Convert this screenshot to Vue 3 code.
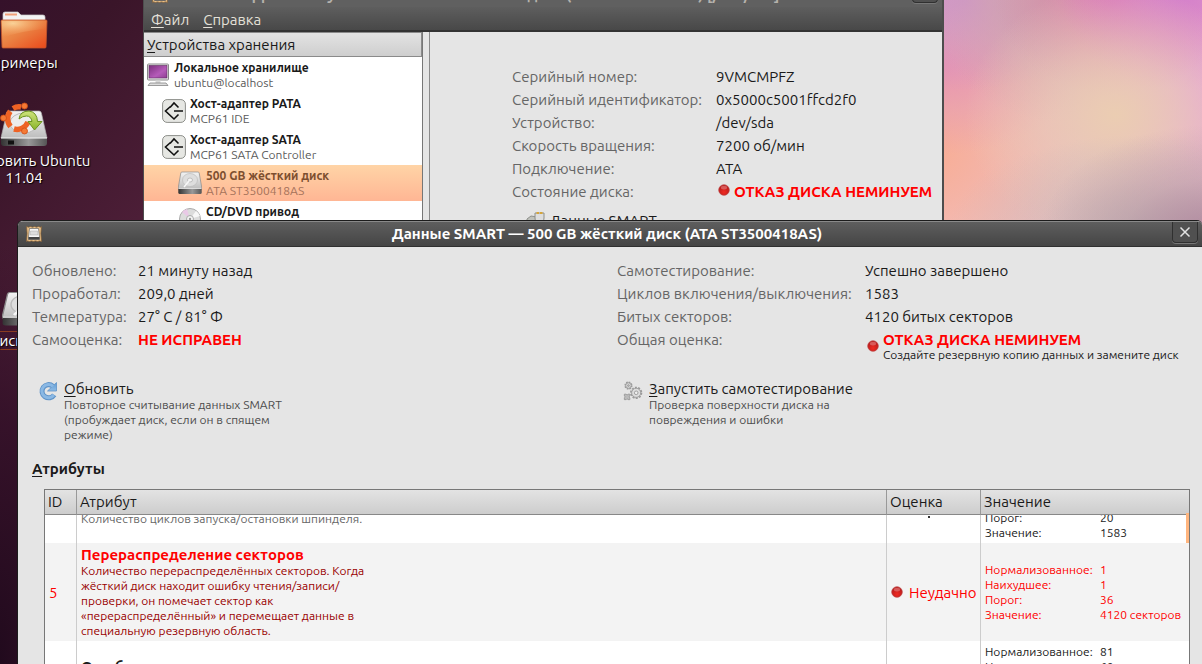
<script setup>
const tree = [
  { icon: 'computer', level: 0, name: 'Локальное хранилище', note: 'ubuntu@localhost' },
  { icon: 'adapter', level: 1, name: 'Хост-адаптер PATA', note: 'MCP61 IDE' },
  { icon: 'adapter', level: 1, name: 'Хост-адаптер SATA', note: 'MCP61 SATA Controller' },
  { icon: 'disk', level: 2, name: '500 GB жёсткий диск', note: 'ATA ST3500418AS', selected: true },
  { icon: 'cd', level: 2, name: 'CD/DVD привод', note: '' },
]
const drive = [
  ['Серийный номер:', '9VMCMPFZ'],
  ['Серийный идентификатор:', '0x5000c5001ffcd2f0'],
  ['Устройство:', '/dev/sda'],
  ['Скорость вращения:', '7200 об/мин'],
  ['Подключение:', 'ATA'],
]
const left = [
  ['Обновлено:', '21 минуту назад'],
  ['Проработал:', '209,0 дней'],
  ['Температура:', '27° C / 81° Ф'],
]
const right = [
  ['Самотестирование:', 'Успешно завершено'],
  ['Циклов включения/выключения:', '1583'],
  ['Битых секторов:', '4120 битых секторов'],
]
const failed = [
  ['Нормализованное:', '1'],
  ['Наихудшее:', '1'],
  ['Порог:', '36'],
  ['Значение:', '4120 секторов'],
]
const next = [
  ['Нормализованное:', '81'],
  ['Наихудшее:', '60'],
]
</script>

<template>
  <main class="desktop">
    <svg width="0" height="0" class="defs" aria-hidden="true">
      <defs>
        <linearGradient id="metal" x1="0" y1="0" x2="0" y2="1">
          <stop offset="0" stop-color="#f4f4f4" /><stop offset="1" stop-color="#bdbdbd" />
        </linearGradient>
        <linearGradient id="rim" x1="0" y1="0" x2="1" y2="0">
          <stop offset="0" stop-color="#333" /><stop offset="0.6" stop-color="#999" /><stop offset="1" stop-color="#555" />
        </linearGradient>
        <linearGradient id="orange" x1="0" y1="0" x2="1" y2="1">
          <stop offset="0" stop-color="#f2a45e" /><stop offset="0.45" stop-color="#ea8243" /><stop offset="1" stop-color="#e9481a" />
        </linearGradient>
        <radialGradient id="shine" cx="0.25" cy="0.15" r="0.8">
          <stop offset="0" stop-color="#fbdca4" stop-opacity="0.85" /><stop offset="1" stop-color="#f6a968" stop-opacity="0" />
        </radialGradient>
        <linearGradient id="leaf" x1="0" y1="0" x2="0" y2="1">
          <stop offset="0" stop-color="#cfe37c" /><stop offset="1" stop-color="#8ab52a" />
        </linearGradient>
        <linearGradient id="screen" x1="0" y1="0" x2="1" y2="1">
          <stop offset="0" stop-color="#7c2f7e" /><stop offset="0.6" stop-color="#b55bb9" /><stop offset="1" stop-color="#8e3d92" />
        </linearGradient>
        <linearGradient id="blue" x1="0" y1="0" x2="0" y2="1">
          <stop offset="0" stop-color="#5f9ad2" /><stop offset="1" stop-color="#8dbbe6" />
        </linearGradient>
        <radialGradient id="lamp" cx="0.5" cy="0.7" r="0.6">
          <stop offset="0" stop-color="#f02a22" /><stop offset="1" stop-color="#b81c1c" />
        </radialGradient>
        <symbol id="i-disk" viewBox="0 0 24 24" preserveAspectRatio="none">
          <path d="M4 1h16q1 0 1.200 1L24 18H0L2.800 2Q3 1 4 1z" fill="url(#metal)" stroke="#8a8a8a" stroke-width=".7" />
          <path d="M.3 17.500h23.400v4q0 1.500-1.500 1.500H1.800Q.3 23 .3 21.500z" fill="url(#rim)" />
          <path d="M.5 17.500h23" stroke="#ececec" stroke-width=".8" />
          <ellipse cx="12" cy="9" rx="7.500" ry="6.500" fill="#dedede" stroke="#bbb" stroke-width=".7" />
          <ellipse cx="12" cy="9" rx="2.500" ry="2" fill="#f4f4f4" stroke="#aaa" stroke-width=".7" />
          <path d="M6 16l5-6" stroke="#f7f7f7" stroke-width="1.500" />
        </symbol>
        <symbol id="i-app" viewBox="0 0 16 16">
          <path d="M.5.500l2 .7 2-.7 2 .7 2-.7 2 .7 2-.7 2 .7 1-.7-.6 7 .6 8-2-.6-2 .6-2-.6-2 .6-2-.6-2 .6-2-.6-1 .6.600-8z" fill="#e8c08a" stroke="#805c34" stroke-width=".7" />
          <path d="M3.500 2.500h9l1 8.500v2.500h-11V11z" fill="#f7f7f7" stroke="#555" stroke-width=".6" />
          <path d="M4.500 5h7l.3 4H4.200z" fill="#ddd" stroke="#999" stroke-width=".4" />
          <path d="M2.500 11h11v2.500h-11z" fill="#444" />
        </symbol>
        <symbol id="i-lamp" viewBox="0 0 12 12">
          <circle cx="6" cy="6" r="5.300" fill="url(#lamp)" stroke="#b44" stroke-width=".7" />
          <ellipse cx="6" cy="3.600" rx="3.200" ry="1.900" fill="#e58a8a" opacity=".55" />
        </symbol>
      </defs>
    </svg>

    <a class="launcher examples" href="#examples">
      <svg viewBox="0 0 48 40" width="48" height="40">
        <path d="M3 14V4q0-2 2-2h13l3 3h22q2 0 2 2v7z" fill="#f3f3f3" stroke="#c9c9c9" stroke-width=".7" />
        <path d="M5 4.500h12" stroke="#f0a079" stroke-width="2" />
        <path d="M1 11q0-1 1-1h44q1 0 1 1l-1 26q0 1-1 1H3q-1 0-1-1z" fill="url(#orange)" stroke="#c4542b" stroke-width=".8" />
        <path d="M1.800 10.800h44.400l-.3 8Q20 21 2 28z" fill="url(#shine)" />
      </svg>
      <span>Примеры</span>
    </a>
    <a class="launcher install" href="#install">
      <svg viewBox="0 0 48 46" width="48" height="46">
        <path d="M9 9h30q2 0 2.400 2L47 36H1L6.600 11Q7 9 9 9z" fill="url(#metal)" stroke="#aaa" stroke-width=".7" />
        <path d="M1 36h46v5q0 3-3 3H4q-3 0-3-3z" fill="url(#rim)" />
        <path d="M1 36h46" stroke="#fff" />
        <path d="M8 38.500h6v4H8z" fill="#111" />
        <ellipse cx="24" cy="21" rx="14" ry="10" fill="#ececec" stroke="#bbb" />
        <g fill="none" stroke="#ee6224" stroke-width="5.500">
          <path d="M10.500 24.500a12 12 0 0 1-.2-15.200" />
          <path d="M13 6.500a12 12 0 0 1 8-1.500" />
          <path d="M28 20a12 12 0 0 1-14 7" />
        </g>
        <g fill="#f47a35" stroke="#cf4b14" stroke-width=".8">
          <circle cx="3.500" cy="16" r="3" /><circle cx="24.500" cy="4" r="3" /><circle cx="24.500" cy="29" r="3" />
        </g>
        <path d="M19 17Q20 9 29 9q8 1 8.500 10.500H42L34.500 28 28 19.500h4Q31 14 26.500 14q-4 0-7.500 3z" fill="url(#leaf)" stroke="#6c9320" />
      </svg>
      <span>Установить Ubuntu<br />11.04</span>
    </a>
    <a class="launcher volume" href="#volume">
      <svg width="48" height="36"><use href="#i-disk" /></svg>
      <span>Диск DATA</span>
    </a>

    <section class="window utility">
      <header class="titlebar">
        <svg class="app" width="16" height="16"><use href="#i-app" /></svg>
        <h1>Дисковая утилита — 500 GB жёсткий диск (ATA ST3500418AS) [/dev/sda]</h1>
        <button class="close" aria-label="Закрыть"></button>
      </header>
      <nav class="menubar">
        <button><u>Ф</u>айл</button>
        <button><u>С</u>правка</button>
      </nav>
      <div class="panes">
        <aside class="tree">
          <h2><u>У</u>стройства хранения</h2>
          <ul>
            <li v-for="item in tree" :key="item.name" :class="['level' + item.level, { selected: item.selected }]">
              <svg v-if="item.icon === 'computer'" viewBox="0 0 24 24" width="24" height="24">
                <rect x="1.500" y="1" width="21" height="16" rx="1" fill="#e9e9e9" stroke="#888" />
                <rect x="3" y="2.500" width="18" height="12.500" fill="url(#screen)" stroke="#5d295e" stroke-width=".6" />
                <path d="M9.500 17.500h5v2.500h-5z" fill="#d8d8d8" />
                <path d="M4 20h16l2 2.500H2z" fill="#ddd" stroke="#777" stroke-width=".7" />
              </svg>
              <svg v-else-if="item.icon === 'adapter'" viewBox="0 0 24 24" width="24" height="24">
                <rect x=".6" y=".6" width="22.800" height="22.800" rx="4.500" fill="#e6e7e3" stroke="#8d8f8a" />
                <path d="M8 8.500L12 4l4.500 4.500M8.500 7.500L3.500 12l8.500 8 4.500-4.500M12 12h9" fill="none" stroke="#111" stroke-width="1.600" />
              </svg>
              <svg v-else-if="item.icon === 'disk'" width="24" height="24"><use href="#i-disk" /></svg>
              <svg v-else viewBox="0 0 24 24" width="24" height="24">
                <circle cx="12" cy="12" r="10.500" fill="#dcdcdc" stroke="#aaa" />
                <path d="M12 12L4 5A10.500 10.500 0 0 1 9 2z" fill="#e9c9e6" />
                <path d="M12 12l6-8a10 10 0 0 1 4 5z" fill="#f7f7f7" />
                <circle cx="12" cy="12" r="3.500" fill="#f4f4f4" stroke="#aaa" /><circle cx="12" cy="12" r="1.200" fill="#999" />
              </svg>
              <div><strong>{{ item.name }}</strong><small>{{ item.note }}</small></div>
            </li>
          </ul>
        </aside>
        <div class="detail">
          <dl class="facts">
            <template v-for="[k, v] in drive" :key="k"><dt>{{ k }}</dt><dd>{{ v }}</dd></template>
            <dt>Состояние диска:</dt>
            <dd class="alert"><svg width="12" height="12"><use href="#i-lamp" /></svg><strong>ОТКАЗ ДИСКА НЕМИНУЕМ</strong></dd>
          </dl>
          <button class="smart">
            <svg viewBox="0 0 20 20" width="20" height="20">
              <path d="M1 8l4-3 6 1v9H1z" fill="#bfc1bc" stroke="#8d8f8a" />
              <path d="M9 2h9v5q0 4-4.500 5Q9 11 9 7z" fill="#ddd" stroke="#8d8f8a" />
              <path d="M10.500 2h6" stroke="#d6a53a" stroke-width="2" stroke-dasharray="2.500 1" />
            </svg>
            Данные SMART
          </button>
        </div>
      </div>
    </section>

    <section class="window dialog">
      <header class="titlebar">
        <svg class="app" width="16" height="16"><use href="#i-app" /></svg>
        <h1>Данные SMART — 500 GB жёсткий диск (ATA ST3500418AS)</h1>
        <button class="close" aria-label="Закрыть">
          <svg viewBox="0 0 12 12" width="12" height="12"><path d="M1.500 1.500l9 9M10.500 1.500l-9 9" stroke="#e2e2e2" stroke-width="1.500" /></svg>
        </button>
      </header>
      <div class="content">
        <div class="summary">
          <dl class="facts first">
            <template v-for="[k, v] in left" :key="k"><dt>{{ k }}</dt><dd>{{ v }}</dd></template>
            <dt>Самооценка:</dt><dd class="alert"><strong>НЕ ИСПРАВЕН</strong></dd>
          </dl>
          <dl class="facts second">
            <template v-for="[k, v] in right" :key="k"><dt>{{ k }}</dt><dd>{{ v }}</dd></template>
            <dt>Общая оценка:</dt>
            <dd class="alert overall">
              <svg width="12" height="12"><use href="#i-lamp" /></svg>
              <div><strong>ОТКАЗ ДИСКА НЕМИНУЕМ</strong><small>Создайте резервную копию данных и замените диск</small></div>
            </dd>
          </dl>
        </div>
        <div class="actions">
          <button>
            <svg viewBox="0 0 20 20" width="20" height="20">
              <path d="M16.200 13.800a6.600 6.600 0 1 1-1.400-8.700" fill="none" stroke="#5f93c8" stroke-width="5" />
              <path d="M18.500 1.500v8.500H9.500z" fill="url(#blue)" stroke="#5f93c8" stroke-width=".8" />
              <path d="M15.800 14a6.600 6.600 0 1 1-.8-8.700" fill="none" stroke="#8ab8e4" stroke-width="3" />
            </svg>
            <span><b><u>О</u>бновить</b><small>Повторное считывание данных SMART<br />(пробуждает диск, если он в спящем<br />режиме)</small></span>
          </button>
          <button>
            <svg viewBox="0 0 22 22" width="20" height="20" fill="#ddd" stroke="#999">
              <circle cx="6" cy="5" r="3.600" stroke-width="1.800" stroke-dasharray="1.800 1" /><circle cx="6" cy="5" r="3" /><circle cx="6" cy="5" r="1" fill="#bbb" />
              <circle cx="14.500" cy="13" r="5.800" stroke-width="1.900" stroke-dasharray="2.200 1.400" /><circle cx="14.500" cy="13" r="5" /><circle cx="14.500" cy="13" r="2" fill="#eee" />
              <path d="M1.500 14.500h2l1 1 1-1h2v2l-1 1 1 1v2h-2l-1-1-1 1h-2v-2l1-1-1-1z" fill="#bbb" />
            </svg>
            <span><b><u>З</u>апустить самотестирование</b><small>Проверка поверхности диска на<br />повреждения и ошибки</small></span>
          </button>
        </div>
        <h2><u>А</u>трибуты</h2>
        <div class="listing">
          <table>
            <colgroup><col class="c-id" /><col /><col class="c-rate" /><col class="c-value" /></colgroup>
            <thead><tr><th>ID</th><th>Атрибут</th><th>Оценка</th><th>Значение</th></tr></thead>
            <tbody>
              <tr class="partial">
                <td></td>
                <td><div class="clip"><p class="spindle">Количество циклов запуска/остановки шпинделя.</p></div></td>
                <td><div class="clip"><span class="tick"></span></div></td>
                <td><div class="clip"><dl class="values"><dt>Порог:</dt><dd>20</dd><dt>Значение:</dt><dd>1583</dd></dl></div></td>
              </tr>
              <tr class="failed">
                <td>5</td>
                <td><strong>Перераспределение секторов</strong><p>Количество перераспределённых секторов. Когда<br />жёсткий диск находит ошибку чтения/записи/<br />проверки, он помечает сектор как<br />«перераспределённый» и перемещает данные в<br />специальную резервную область.</p></td>
                <td><div class="rate"><svg width="12" height="12"><use href="#i-lamp" /></svg>Неудачно</div></td>
                <td><dl class="values"><template v-for="[k, v] in failed" :key="k"><dt>{{ k }}</dt><dd>{{ v }}</dd></template></dl></td>
              </tr>
              <tr class="following">
                <td></td>
                <td><strong>Ошибки</strong></td>
                <td></td>
                <td><dl class="values"><template v-for="[k, v] in next" :key="k"><dt>{{ k }}</dt><dd>{{ v }}</dd></template></dl></td>
              </tr>
            </tbody>
          </table>
          <span class="marker"></span>
        </div>
      </div>
    </section>
  </main>
</template>

<style>
body {
  margin: 0;
  overflow: hidden;
}
</style>

<style scoped>
.desktop {
  position: relative;
  height: 100vh;
  overflow: hidden;
  font: 15px/23px "Ubuntu", "Noto Sans", "Open Sans", sans-serif;
  color: #1a1a1a;
  background:
    radial-gradient(ellipse 170px 110px at 1210px 235px, rgba(170, 132, 155, 0.9) 0, rgba(180, 145, 165, 0.4) 50%, transparent 100%),
    radial-gradient(ellipse 190px 90px at 1140px 225px, rgba(192, 178, 176, 0.9) 0, rgba(200, 184, 182, 0.45) 50%, transparent 100%),
    radial-gradient(ellipse 150px 130px at 1115px 115px, #ebcdb2 0, rgba(235, 205, 182, 0.6) 45%, transparent 100%),
    radial-gradient(ellipse 120px 100px at 1180px -10px, #d480cc 0, rgba(216, 128, 204, 0.5) 50%, transparent 100%),
    radial-gradient(ellipse 120px 100px at 1115px -5px, #da78b0 0, rgba(222, 130, 172, 0.5) 50%, transparent 100%),
    radial-gradient(ellipse 110px 190px at 1210px 80px, #e6a0da 0, rgba(230, 166, 216, 0.5) 50%, transparent 100%),
    radial-gradient(ellipse 110px 120px at 1045px 0, #cba2aa 0, rgba(208, 166, 170, 0.5) 50%, transparent 100%),
    radial-gradient(ellipse 140px 90px at 965px 0, #cf95ca 0, rgba(208, 152, 200, 0.5) 50%, transparent 100%),
    radial-gradient(ellipse 140px 90px at 940px 65px, #e893b0 0, rgba(230, 152, 178, 0.5) 50%, transparent 100%),
    radial-gradient(ellipse 150px 150px at 930px 150px, #f9ad94 0, rgba(248, 178, 158, 0.6) 50%, transparent 100%),
    linear-gradient(#dcaab8, #eec0c4) 944px 0 / 260px 222px no-repeat,
    radial-gradient(ellipse 100px 420px at 0 664px, #210a1d 0, rgba(48, 15, 38, 0.8) 60%, transparent 100%),
    linear-gradient(130deg, #35112a 0, #3a1529 90px, #50203a 280px, #501d38 320px, #250b20 900px);
}
.desktop *, .desktop *::before { box-sizing: border-box; }
.defs { position: absolute; }
h1, h2, dl, dd, ul, p { margin: 0; padding: 0; }
button { font: inherit; color: inherit; background: none; border: 0; padding: 0; text-align: left; }
svg { flex: none; display: block; }
u { text-underline-offset: 2px; }
.launcher {
  position: absolute;
  left: -56px;
  width: 160px;
  display: flex;
  flex-direction: column;
  align-items: center;
  gap: 4px;
  color: #fff;
  text-align: center;
  text-decoration: none;
  line-height: 17px;
  white-space: nowrap;
  text-shadow: 1px 1px 1px #000;
}
.examples { top: 10px; }
.install { top: 102px; }
.volume { top: 291px; left: -54px; }
.volume span { border: 1px solid #8a3c22; border-width: 1px 0; }
.titlebar {
  display: flex;
  align-items: center;
  height: 26px;
  padding: 0 4px 0 8px;
  color: #fff;
  background: linear-gradient(#5e5e5e, #454545);
  border-top: 1px solid #898989;
  border-bottom: 1px solid #303030;
}
.titlebar h1 { flex: 1; text-align: center; font-size: 15px; font-weight: 700; line-height: 24px; white-space: nowrap; }
.close {
  width: 26px;
  height: 21px;
  display: grid;
  place-items: center;
  align-self: flex-start;
  border: 1px solid #303030;
  border-top: 0;
  border-radius: 0 0 4px 4px;
  background: #505050;
  box-shadow: 0 1px 0 #777;
}

.window { position: absolute; background: #e5e5e5; }
.utility {
  top: -19px;
  left: 143px;
  width: 801px;
  border: 1px solid #4d4d4d;
  border-width: 0 2px 0 1px;
}
.utility .titlebar { border-bottom: 0; color: #b5b2ac; background: #606060; }
.utility h1 { padding-right: 48px; }
.menubar {
  display: flex;
  gap: 14px;
  height: 25px;
  padding-left: 7px;
  color: #e4e0d8;
  background: linear-gradient(#5e5e5e, #484848);
  border-bottom: 2px solid #333;
}
.menubar button { line-height: 26px; }
.panes { display: flex; height: 200px; }
.tree { width: 279px; background: #fff; border-right: 1px solid #777; }
.tree h2 {
  font-size: 15px;
  font-weight: 400;
  line-height: 24px;
  height: 25px;
  padding-left: 3px;
  border: 1px solid #8a8a8a;
  border-left: 0;
  background: linear-gradient(#e3e3e3, #cecece);
}
.tree ul { list-style: none; }
.tree li { display: flex; align-items: center; gap: 4px; height: 36px; }
.tree li.level0 { padding-left: 2px; }
.tree li.level1 { padding-left: 18px; }
.tree li.level2 { padding-left: 34px; }
.tree li div { font-size: 12px; line-height: 15px; padding-bottom: 1px; }
.tree strong, .tree small { display: block; font-size: 12px; min-height: 15px; }
.tree small { color: #5a5a5a; }
.tree .selected { background: linear-gradient(#ffd4a6, #ffb694); }
.tree .selected strong { color: #7d4f2f; }
.tree .selected small { color: #a5725a; }
.detail { flex: 1; margin-left: 6px; border: 1px solid #8a8a8a; border-width: 0 0 0 1px; padding: 33px 0 0 82px; }
.facts { display: grid; grid-template-columns: 204px 1fr; }
.facts dt { color: #666; white-space: nowrap; }
.facts dd { white-space: nowrap; }
.alert { display: flex; gap: 4px; padding-left: 2px; color: #f00; }
.detail .alert svg { margin-top: 4px; }
.smart { display: flex; align-items: center; gap: 4px; margin: 6px 0 0 14px; }

.dialog {
  top: 220px;
  left: 17px;
  right: 0;
  bottom: 0;
  border: 1px solid #1c1c1c;
  border-width: 1px 0 0 1px;
  border-radius: 6px 5px 0 0;
  overflow: hidden;
}
.content { padding: 12px 0 0 14px; }
.summary, .actions { display: grid; grid-template-columns: 1fr 1fr; }
.first { grid-template-columns: 106px 1fr; align-content: start; }
.second { grid-template-columns: 248px 1fr; }
.first .alert { padding-left: 0; }
.overall { align-items: center; }
.overall strong { display: block; line-height: 19px; padding-top: 2px; }
.overall small { display: block; font-size: 12px; line-height: 12px; color: #1a1a1a; padding-bottom: 2px; }
.actions { margin-top: 17px; }
.actions button { display: flex; gap: 6px; padding-left: 6px; }
.actions button svg { margin-top: 1px; }
.actions b { display: block; font-weight: 400; line-height: 17px; }
.actions small { display: block; font-size: 12px; line-height: 15px; color: #4c4c4c; }
.content h2 { font-size: 15px; line-height: 20px; margin-top: 17px; }
.listing { position: relative; margin: 10px 12px 0 12px; border: 1px solid #777; border-bottom: 0; background: #fff; }
table { width: 100%; table-layout: fixed; border-collapse: separate; border-spacing: 0; }
.c-id { width: 32px; }
.c-rate { width: 94px; }
.c-value { width: 208px; }
th {
  height: 25px;
  padding: 0 3px;
  text-align: left;
  font-weight: 400;
  line-height: 24px;
  background: linear-gradient(#e3e3e3, #cdcdcd);
  border-right: 1px solid #999;
  border-bottom: 1px solid #888;
}
td { padding: 0 4px; border-right: 1px solid #ccc; font-size: 12px; line-height: 15px; }
th:last-child, td:last-child { border-right: 0; }
.clip { display: flex; flex-direction: column; justify-content: flex-end; height: 28px; overflow: hidden; }
.spindle { color: #666; padding-bottom: 17px; }
.tick { width: 2px; height: 2px; margin: 0 0 25px 37px; background: #333; }
.values { display: grid; grid-template-columns: 115px 1fr; white-space: nowrap; }
.partial .values { padding-bottom: 3px; }
.failed td { height: 98px; color: #f00; background: #f3f3f3; }
.failed td:first-child { font-size: 15px; }
.failed td p { color: #900; }
.failed strong, .following strong { display: block; font-size: 15px; line-height: 17px; }
.rate { display: flex; align-items: center; gap: 6px; font-size: 15px; white-space: nowrap; }
.following td { height: 98px; vertical-align: top; padding-top: 3px; }
.following strong { padding-top: 14px; }
.marker { position: absolute; top: 23px; right: 0; width: 3px; height: 30px; background: #ffb57e; }
</style>
